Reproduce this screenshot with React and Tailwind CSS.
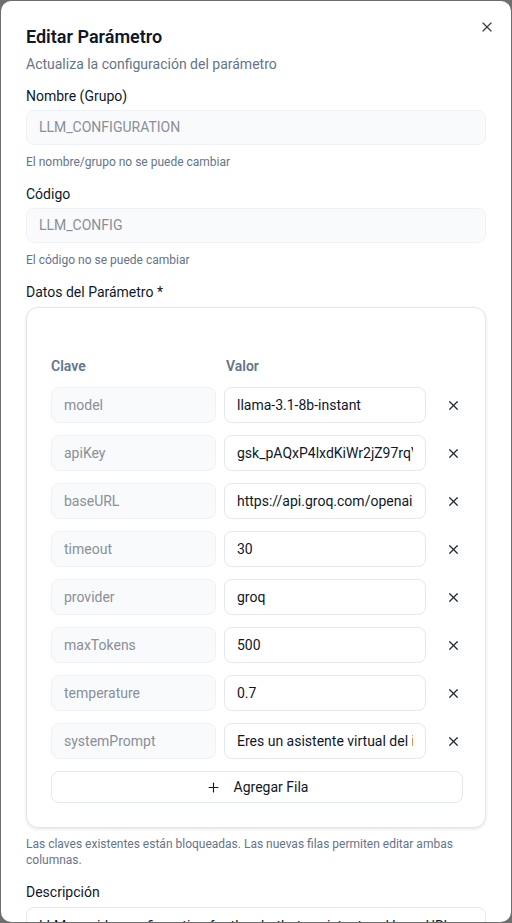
import React from 'react';
import { X, Plus } from 'lucide-react';

const rows = [
  { key: 'model', value: 'llama-3.1-8b-instant' },
  { key: 'apiKey', value: 'gsk_pAQxP4lxdKiWr2jZ97rqVbN3mWGdyb3FYx8kQe2' },
  { key: 'baseURL', value: 'https://api.groq.com/openai/v1' },
  { key: 'timeout', value: '30' },
  { key: 'provider', value: 'groq' },
  { key: 'maxTokens', value: '500' },
  { key: 'temperature', value: '0.7' },
  { key: 'systemPrompt', value: 'Eres un asistente virtual del instituto' },
];

function Field({ label, value, help }) {
  return (
    <div>
      <p className="text-[14px] leading-5 text-[#0f172a]">{label}</p>
      <div className="mt-[4px] flex h-[35px] items-center rounded-lg border border-[#eef1f5] bg-[#f8fafc] px-[12px] text-[14px] text-[#8a8f98]">
        {value}
      </div>
      <p className="mt-[9px] text-[12px] leading-4 text-[#64748b]">{help}</p>
    </div>
  );
}

export default function App() {
  return (
    <div className="h-[923px] bg-[#6e6e6e] p-px" style={{ fontFamily: 'Roboto, "Noto Sans", sans-serif' }}>
      <div className="relative h-full overflow-hidden rounded-[10px] bg-white px-[25px] pt-[26px]">
        <button className="absolute right-[16px] top-[18px] text-[#3f3f46]">
          <X size={16} strokeWidth={1.8} />
        </button>

        <h1 className="text-[18px] font-semibold leading-5 text-[#0f172a]">Editar Parámetro</h1>
        <p className="mt-[7px] text-[14px] leading-5 text-[#64748b]">Actualiza la configuración del parámetro</p>

        <div className="mt-[12px] flex flex-col gap-[14px]">
          <Field label="Nombre (Grupo)" value="LLM_CONFIGURATION" help="El nombre/grupo no se puede cambiar" />
          <Field label="Código" value="LLM_CONFIG" help="El código no se puede cambiar" />

          <div>
            <p className="text-[14px] leading-5 text-[#0f172a]">Datos del Parámetro *</p>
            <div className="mt-[5px] rounded-xl border border-[#e2e8f0] bg-white px-[24px] pb-[24px] pt-[48px] shadow-[0_1px_3px_rgba(15,23,42,0.12)]">
              <div className="flex text-[14px] font-semibold leading-5 text-[#64748b]">
                <span className="w-[175px]">Clave</span>
                <span>Valor</span>
              </div>
              <div className="mt-[11px] flex flex-col gap-[12px]">
                {rows.map((r) => (
                  <div key={r.key} className="flex items-center">
                    <div className="flex h-[36px] w-[167px] items-center rounded-lg border border-[#eef1f5] bg-[#f8fafc] px-[12px] text-[14px] text-[#8a8f98]">
                      {r.key}
                    </div>
                    <input
                      readOnly
                      value={r.value}
                      className="ml-[8px] h-[36px] w-[202px] rounded-lg border border-[#e2e8f0] bg-white px-[12px] text-[14px] text-[#0f172a] outline-none"
                    />
                    <button className="ml-[20px] text-[#1f2937]">
                      <X size={15} strokeWidth={1.9} />
                    </button>
                  </div>
                ))}
              </div>
              <button className="mt-[12px] flex h-[32px] w-[412px] items-center justify-center gap-[13px] rounded-lg border border-[#e2e8f0] bg-white text-[14px] text-[#0f172a]">
                <Plus size={15} strokeWidth={1.8} />
                Agregar Fila
              </button>
            </div>
            <p className="mt-[8px] text-[12px] leading-4 text-[#64748b]">
              Las claves existentes están bloqueadas. Las nuevas filas permiten editar ambas columnas.
            </p>
          </div>

          <div>
            <p className="text-[14px] leading-5 text-[#0f172a]">Descripción</p>
            <div className="mt-[5px] h-[60px] rounded-lg border border-[#e2e8f0] bg-white px-[12px] pt-[8px] text-[14px] text-[#0f172a]">
              LLM provider configuration for the chatbot assistant and base URL
            </div>
          </div>
        </div>
      </div>
    </div>
  );
}
